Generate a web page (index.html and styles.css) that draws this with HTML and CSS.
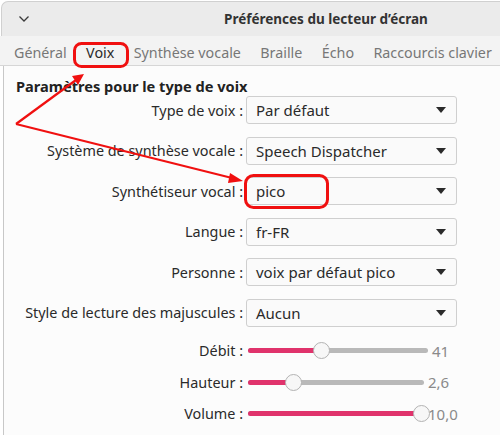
FILE: index.html
```html
<!DOCTYPE html>
<html lang="fr">
<head>
<meta charset="utf-8">
<link rel="stylesheet" href="styles.css">
</head>
<body>
<div class="window">
  <header class="titlebar">
    <svg class="chevron" width="12" height="8" viewBox="0 0 12 8"><path d="M1.5 1.5 L6 6 L10.5 1.5" fill="none" stroke="#3a3a3a" stroke-width="1.3"/></svg>
    <div class="title">Préférences du lecteur d’écran</div>
  </header>
  <nav class="tabs">
    <span class="tab">Général</span>
    <span class="tab active">Voix</span>
    <span class="tab">Synthèse vocale</span>
    <span class="tab">Braille</span>
    <span class="tab">Écho</span>
    <span class="tab">Raccourcis clavier</span>
  </nav>
  <main class="page">
    <h2 class="heading">Paramètres pour le type de voix</h2>
    <div class="form">
      <label class="lbl">Type de voix :</label>
      <div class="combo"><span>Par défaut</span><i class="arrow"></i></div>
      <label class="lbl">Système de synthèse vocale :</label>
      <div class="combo"><span>Speech Dispatcher</span><i class="arrow"></i></div>
      <label class="lbl">Synthétiseur vocal :</label>
      <div class="combo"><span>pico</span><i class="arrow"></i></div>
      <label class="lbl">Langue :</label>
      <div class="combo"><span>fr-FR</span><i class="arrow"></i></div>
      <label class="lbl">Personne :</label>
      <div class="combo"><span>voix par défaut pico</span><i class="arrow"></i></div>
      <label class="lbl">Style de lecture des majuscules :</label>
      <div class="combo"><span>Aucun</span><i class="arrow"></i></div>
    </div>
    <div class="sliders">
      <label class="lbl">Débit :</label>
      <div class="scale">
        <div class="track t-debit"><div class="fill" style="width:41%"></div><div class="thumb" style="left:41%"></div></div>
        <span class="val v-debit">41</span>
      </div>
      <label class="lbl">Hauteur :</label>
      <div class="scale">
        <div class="track t-hauteur"><div class="fill" style="width:26%"></div><div class="thumb" style="left:26%"></div></div>
        <span class="val v-hauteur">2,6</span>
      </div>
      <label class="lbl">Volume :</label>
      <div class="scale">
        <div class="track t-volume"><div class="fill" style="width:100%"></div><div class="thumb" style="left:100%"></div></div>
        <span class="val v-volume">10,0</span>
      </div>
    </div>
  </main>
  <svg class="annot" width="500" height="435" viewBox="0 0 500 435">
    <rect x="74.5" y="42.5" width="53" height="23" rx="7" fill="none" stroke="#f01010" stroke-width="3"/>
    <rect x="245.5" y="174.5" width="82" height="32" rx="8" fill="none" stroke="#f01010" stroke-width="3"/>
    <line x1="16" y1="123" x2="76" y2="79" stroke="#f01010" stroke-width="2.2"/>
    <polygon points="84,73 72,75 78,84" fill="#f01010"/>
    <line x1="16" y1="123" x2="232" y2="177" stroke="#f01010" stroke-width="2.2"/>
    <polygon points="243,180 230,172 228,182" fill="#f01010"/>
  </svg>
</div>
</body>
</html>
```

FILE: styles.css
```css
* { box-sizing: border-box; }
html, body { margin: 0; padding: 0; }
body {
  width: 500px;
  height: 435px;
  overflow: hidden;
  background: #ffffff;
  font-family: "Noto Sans", "DejaVu Sans", sans-serif;
  color: #2e2e2e;
}
.window {
  position: relative;
  width: 500px;
  height: 435px;
  background: #ffffff;
}
.titlebar {
  height: 35px;
  margin-top: 1px;
  margin-left: 1px;
  background: #ebebeb;
  border-top: 1px solid #d0d0d0;
  border-left: 1px solid #d0d0d0;
  border-top-left-radius: 7px;
  display: flex;
  align-items: center;
  position: relative;
}
.chevron { margin-left: 16px; }
.title {
  margin-left: 194px;
  font-size: 13.5px;
  font-weight: bold;
  color: #333;
}
.tabs {
  height: 30px;
  background: #f3f3f3;
  border-bottom: 1px solid #d6d6d6;
  display: flex;
  align-items: center;
  padding: 4px 0 0 14px;
  gap: 19.4px;
  font-size: 14.3px;
  color: #777;
  white-space: nowrap;
  overflow: hidden;
}
.tab { flex-shrink: 0; }
.tab.active { color: #2a2a2a; }
.page {
  margin-left: 3px;
  border-left: 1px solid #c8c8c8;
  height: 370px;
  background: #fcfcfc;
  padding: 10px 0 0 12px;
}
.heading {
  margin: 0;
  height: 20px;
  line-height: 20px;
  font-size: 14.6px;
  font-weight: bold;
  color: #222;
}
.form {
  display: grid;
  grid-template-columns: 227px 211px;
  column-gap: 3px;
  row-gap: 12.6px;
  margin-top: 0;
}
.lbl {
  text-align: right;
  font-size: 14.4px;
  align-self: center;
  color: #2a2a2a;
  white-space: nowrap;
}
.combo {
  height: 28px;
  border: 1px solid #cfcfcf;
  border-radius: 3px;
  background: #fafafa;
  display: flex;
  align-items: center;
  justify-content: space-between;
  padding: 0 10px 0 9px;
  font-size: 15px;
  color: #2a2a2a;
}
.arrow {
  width: 0; height: 0;
  border-left: 5px solid transparent;
  border-right: 5px solid transparent;
  border-top: 6px solid #2a2a2a;
}
.sliders {
  display: grid;
  grid-template-columns: 227px auto;
  column-gap: 3px;
  grid-auto-rows: 31.6px;
  margin-top: 8px;
  align-items: center;
}
.scale {
  display: flex;
  align-items: center;
  margin-left: 2px;
}
.track {
  position: relative;
  height: 5px;
  border-radius: 3px;
  background: #b9b9b9;
}
.t-debit { width: 180px; }
.t-hauteur { width: 176px; }
.t-volume { width: 173px; }
.fill {
  height: 5px;
  border-radius: 3px;
  background: #e0336c;
}
.thumb {
  position: absolute;
  top: -6px;
  width: 17px;
  height: 17px;
  margin-left: -8.5px;
  border-radius: 50%;
  background: #f7f7f7;
  border: 1px solid #b3b3b3;
}
.val {
  font-size: 15px;
  color: #8a8a8a;
}
.v-debit { margin-left: 4px; }
.v-hauteur { margin-left: 4px; }
.v-volume { margin-left: 7px; }
.annot {
  position: absolute;
  left: 0; top: 0;
  pointer-events: none;
}
```
